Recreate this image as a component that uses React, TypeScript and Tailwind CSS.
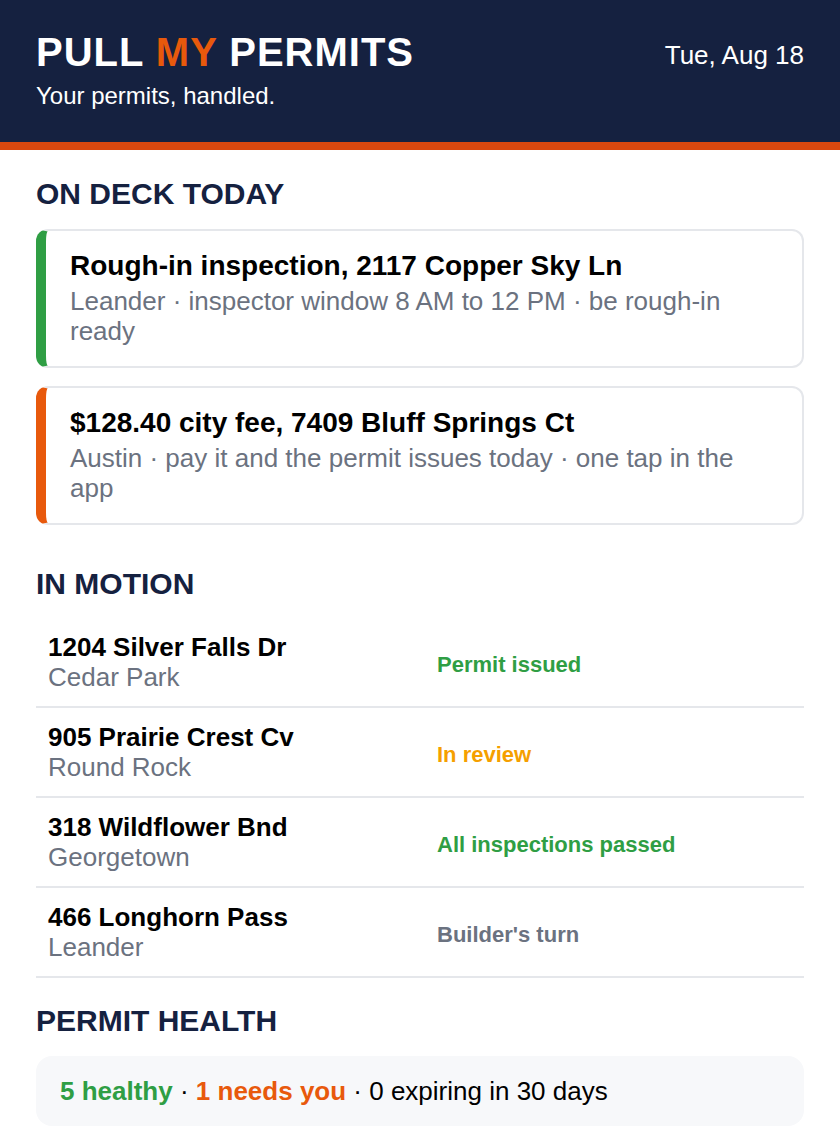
import React from "react";

const onDeck = [
  {
    title: "Rough-in inspection, 2117 Copper Sky Ln",
    detail: "Leander · inspector window 8 AM to 12 PM · be rough-in ready",
    bar: "border-l-[#2f9e44]",
  },
  {
    title: "$128.40 city fee, 7409 Bluff Springs Ct",
    detail: "Austin · pay it and the permit issues today · one tap in the app",
    bar: "border-l-[#e8590c]",
  },
];

const inMotion = [
  { street: "1204 Silver Falls Dr", city: "Cedar Park", status: "Permit issued", tone: "text-[#2f9e44]" },
  { street: "905 Prairie Crest Cv", city: "Round Rock", status: "In review", tone: "text-[#f59f00]" },
  { street: "318 Wildflower Bnd", city: "Georgetown", status: "All inspections passed", tone: "text-[#2f9e44]" },
  { street: "466 Longhorn Pass", city: "Leander", status: "Builder's turn", tone: "text-[#6b7280]" },
];

function SectionHeading({ children }: { children: React.ReactNode }) {
  return (
    <h2 className="text-[30px] font-bold leading-[34px] text-[#152140]">
      {children}
    </h2>
  );
}

export default function App() {
  return (
    <div className="min-h-[1130px] bg-white font-['Liberation_Sans',Arial,sans-serif] text-black">
      {/* Header */}
      <header className="flex items-start justify-between bg-[#152140] px-9 pb-8 pt-8 text-white">
        <div>
          <h1 className="text-[40px] font-bold leading-none tracking-wide">
            PULL <span className="text-[#e8590c]">MY</span> PERMITS
          </h1>
          <p className="mt-[9px] text-[24px] leading-[29px]">Your permits, handled.</p>
        </div>
        <div className="mt-[10px] text-[26px] leading-none">Tue, Aug 18</div>
      </header>
      <div className="h-2 bg-[#d9480f]" />

      <main className="flex flex-col px-9 pt-[27px]">
        {/* On deck */}
        <section>
          <SectionHeading>ON DECK TODAY</SectionHeading>
          <div className="mt-[18px] flex flex-col gap-[18px]">
            {onDeck.map((item) => (
              <div
                key={item.title}
                className={`rounded-xl border-2 border-l-[10px] border-[#e5e7eb] px-6 pb-5 pt-[19px] ${item.bar}`}
              >
                <div className="text-[28px] font-bold leading-[32px]">{item.title}</div>
                <div className="mt-1 text-[26px] leading-[30px] text-[#6b7280]">{item.detail}</div>
              </div>
            ))}
          </div>
        </section>

        {/* In motion */}
        <section className="mt-[42px]">
          <SectionHeading>IN MOTION</SectionHeading>
          <div className="mt-[17px]">
            {inMotion.map((row) => (
              <div
                key={row.street}
                className="grid grid-cols-[389px_1fr] items-center border-b-2 border-[#e5e7eb] px-3 py-[14px]"
              >
                <div>
                  <div className="text-[26px] font-bold leading-[30px]">{row.street}</div>
                  <div className="text-[26px] leading-[30px] text-[#6b7280]">{row.city}</div>
                </div>
                <div className={`pt-[5px] text-[22px] font-bold leading-[26px] ${row.tone}`}>{row.status}</div>
              </div>
            ))}
          </div>
        </section>

        {/* Permit health */}
        <section className="mt-[26px]">
          <SectionHeading>PERMIT HEALTH</SectionHeading>
          <div className="mt-[18px] rounded-2xl bg-[#f7f8fa] px-6 py-5 text-[26px] leading-[30px]">
            <span className="font-bold text-[#2f9e44]">5 healthy</span>
            {" · "}
            <span className="font-bold text-[#e8590c]">1 needs you</span>
            {" · 0 expiring in 30 days"}
          </div>
        </section>
      </main>
    </div>
  );
}
